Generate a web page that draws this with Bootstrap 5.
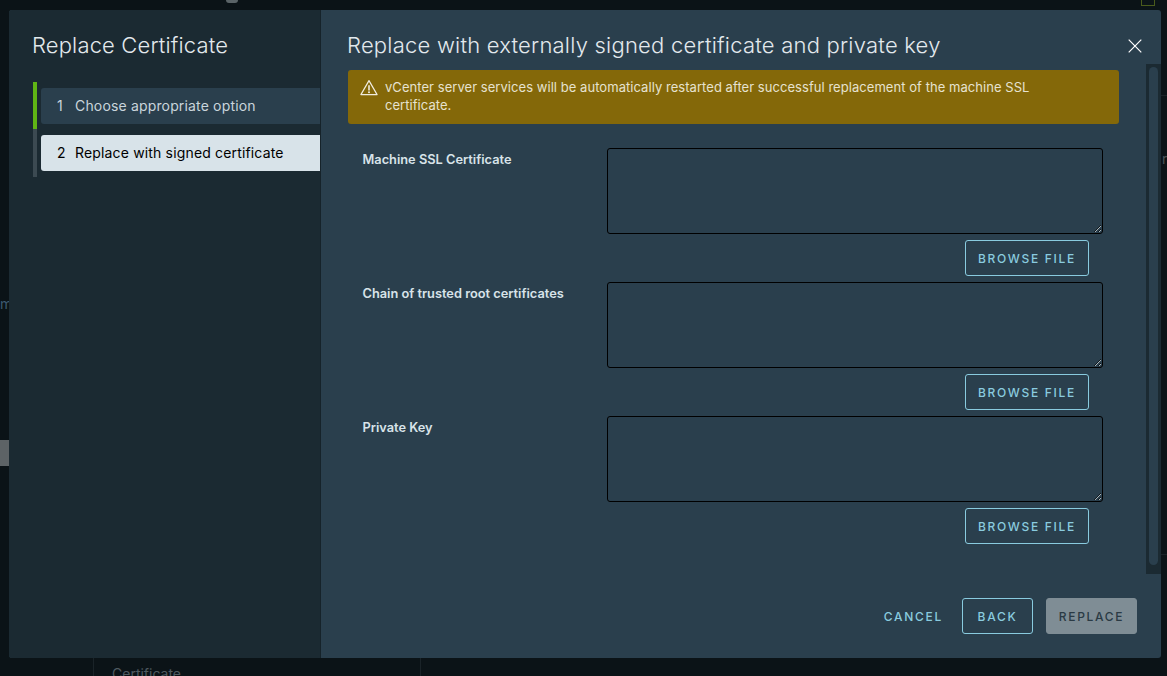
<!doctype html>
<html lang="en"><head><meta charset="utf-8"><title>Replace Certificate</title>
<link href="https://cdn.jsdelivr.net/npm/bootstrap@5.3.0/dist/css/bootstrap.min.css" rel="stylesheet">
<style>
html,body{height:100%;margin:0}
body{background:#0b1317;font-family:"Inter","Noto Sans",sans-serif;overflow:hidden;position:relative;padding:10px 6px 18px 9px;color:#d8e3e9}
.bd-item{position:absolute;color:#4a5459}
.bd-chev{left:20px;top:3px}
.bd-ring{left:226px;top:0;width:12px;height:3px;border-radius:0 0 6px 6px;background:#5a6367}
.bd-m{left:0;top:295px;font-size:14px;line-height:18px;color:#3d5a70}
.bd-grey{left:0;top:440px;width:9px;height:26px;background:#5d6366}
.bd-cert{left:112px;top:665px;font-size:14px;line-height:18px;color:#4f5a60}
.bd-v1{left:93px;top:658px;width:1px;height:18px;background:#1a2328}
.bd-v2{left:420px;top:658px;width:1px;height:18px;background:#1a2328}
.bd-sq{left:1141px;top:0;width:14px;height:6px;border:1px solid #4a5a1c;border-top:0}
.bd-r{left:1162px;top:150px;font-size:14px;line-height:18px;color:#4a5459}
.bd-h1{left:1161px;top:95px;width:6px;height:1px;background:#1a2328}
.bd-h2{left:1161px;top:554px;width:6px;height:1px;background:#1a2328}
.dlg{height:648px;background:#2a3f4d;border-radius:3px;border:0;overflow:hidden;position:relative}
.side{width:312px;background:#1b2a32;border-right:1px solid #16232a;padding:0 0 0 24px}
.side-title{font-size:22px;font-weight:300;line-height:28px;margin:21px 0 23px -1px;color:#e3e9ed;letter-spacing:.15px}
.stepper{padding:0}
.stepline{width:4px;flex:none;margin-right:4px}
.step-a{height:47px;background:#60b515}
.step-b{height:48px;background:#3c4a52}
.step-box{height:36px;font-size:14px;line-height:36px;border-radius:3px 0 0 3px;padding-left:16px;display:flex;letter-spacing:.16px}
.step-box b{font-weight:400;width:18px}
.step-one{background:#2a3f4d;color:#c9d5dc;margin-top:6px}
.step-two{background:#d8e3e9;color:#000;margin-top:11px}
.mainp{min-width:0}
.mhead{height:54px;padding:21px 19px 0 26px}
.mtitle{font-size:22px;font-weight:300;line-height:28px;color:#e3e9ed;margin:0;letter-spacing:.22px}
.xbtn{width:14px;height:14px;background:none;border:0;padding:0;margin-top:8px;line-height:0}
.cbody{padding:6px 27px 0 27px;min-width:0}
.warn{background:#846809;border:0;border-radius:3px;color:#e6e2cf;font-size:13px;line-height:18px;padding:8px 36px 9px 12px;margin:0 0 24px;height:54px;gap:7px;letter-spacing:.05px}
.warn svg{flex:none;margin-top:1px}
.frow{margin-bottom:6px;padding:0 16px 0 15px}
.flabel{width:244px;flex:none;font-size:12.8px;font-weight:600;line-height:18px;padding-top:3px;color:#d8e3e9;margin-left:-.5px;margin-right:.5px}
.ftext{flex:1;min-width:0}
.farea{display:block;height:86px;background:transparent;border:1px solid #000;border-radius:3px;color:#fff;padding:4px;box-shadow:none}
.farea:focus{background:transparent}
.vbtn{font-family:"Inter","Noto Sans",sans-serif;font-size:12px;font-weight:500;letter-spacing:1.7px;text-transform:uppercase;white-space:nowrap;height:36px;border-radius:3px;padding:2px 6px 0;line-height:32px;color:#89cbdf;border:1px solid #89cbdf;background:transparent}
.vbtn-wrap{padding:6px 14px 0 0}
.w-br{width:124px}
.w-bk{width:71px}
.w-rp,.w-rp:disabled{width:91px;background:#7f8d95;border-color:#7f8d95;color:#2a3a44;opacity:1}
.w-cn{border-color:transparent;padding:2px 5px 0 12px}
.track{width:15px;height:510px;background:#1b2a32;padding:3px;flex:none}
.thumb{height:498px;background:#2a3f4d;border-radius:5px}
.mfoot{height:84px;padding:24px 24px 0 0;gap:13px}
</style></head>
<body>
<div class="bd-item bd-chev"><svg width="12" height="7" viewBox="0 0 12 7"><path d="M1 1l5 5 5-5" fill="none" stroke="#5a6367" stroke-width="1.4"/></svg></div>
<div class="bd-item bd-ring"></div>
<div class="bd-item bd-m">m</div>
<div class="bd-item bd-grey"></div>
<div class="bd-item bd-cert">Certificate</div>
<div class="bd-item bd-v1"></div>
<div class="bd-item bd-v2"></div>
<div class="bd-item bd-sq"></div>
<div class="bd-item bd-r">r</div>
<div class="bd-item bd-h1"></div>
<div class="bd-item bd-h2"></div>

<div class="modal-content dlg d-flex flex-row">
  <aside class="side flex-shrink-0">
    <h2 class="side-title">Replace Certificate</h2>
    <div class="d-flex stepper">
      <div class="stepline"><div class="step-a"></div><div class="step-b"></div></div>
      <div class="flex-grow-1">
        <div class="step-box step-one"><b>1</b>Choose appropriate option</div>
        <div class="step-box step-two"><b>2</b>Replace with signed certificate</div>
      </div>
    </div>
  </aside>
  <main class="mainp flex-grow-1 d-flex flex-column">
    <div class="mhead d-flex justify-content-between align-items-start">
      <h3 class="mtitle">Replace with externally signed certificate and private key</h3>
      <button class="xbtn" aria-label="Close"><svg width="14" height="14" viewBox="0 0 14 14"><path d="M.7.7l12.6 12.6M13.3.7L.7 13.3" stroke="#fff" stroke-width="1.2" fill="none"/></svg></button>
    </div>
    <div class="d-flex">
      <div class="cbody flex-grow-1">
        <div class="alert warn d-flex align-items-start" role="alert">
          <svg width="18" height="18" viewBox="0 0 18 18"><path d="M9 1.6L.9 15.6h16.2z" fill="none" stroke="#f0ece0" stroke-width="1.2" stroke-linejoin="round"/><path d="M9 6.2v5.2" stroke="#f0ece0" stroke-width="1.6"/><circle cx="9" cy="13.3" r="1" fill="#f0ece0"/></svg>
          <div>vCenter server services will be automatically restarted after successful replacement of the machine SSL certificate.</div>
        </div>
        <div class="frow d-flex"><label class="flabel">Machine SSL Certificate</label>
          <div class="ftext"><textarea class="form-control farea"></textarea>
          <div class="vbtn-wrap text-end"><button class="btn vbtn w-br">Browse File</button></div></div></div>
        <div class="frow d-flex"><label class="flabel">Chain of trusted root certificates</label>
          <div class="ftext"><textarea class="form-control farea"></textarea>
          <div class="vbtn-wrap text-end"><button class="btn vbtn w-br">Browse File</button></div></div></div>
        <div class="frow d-flex"><label class="flabel">Private Key</label>
          <div class="ftext"><textarea class="form-control farea"></textarea>
          <div class="vbtn-wrap text-end"><button class="btn vbtn w-br">Browse File</button></div></div></div>
      </div>
      <div class="track"><div class="thumb"></div></div>
    </div>
    <div class="mfoot d-flex justify-content-end">
      <button class="btn vbtn w-cn">Cancel</button>
      <button class="btn vbtn w-bk">Back</button>
      <button class="btn vbtn w-rp" disabled>Replace</button>
    </div>
  </main>
</div>
<script src="https://cdn.jsdelivr.net/npm/bootstrap@5.3.0/dist/js/bootstrap.bundle.min.js"></script>
</body></html>
